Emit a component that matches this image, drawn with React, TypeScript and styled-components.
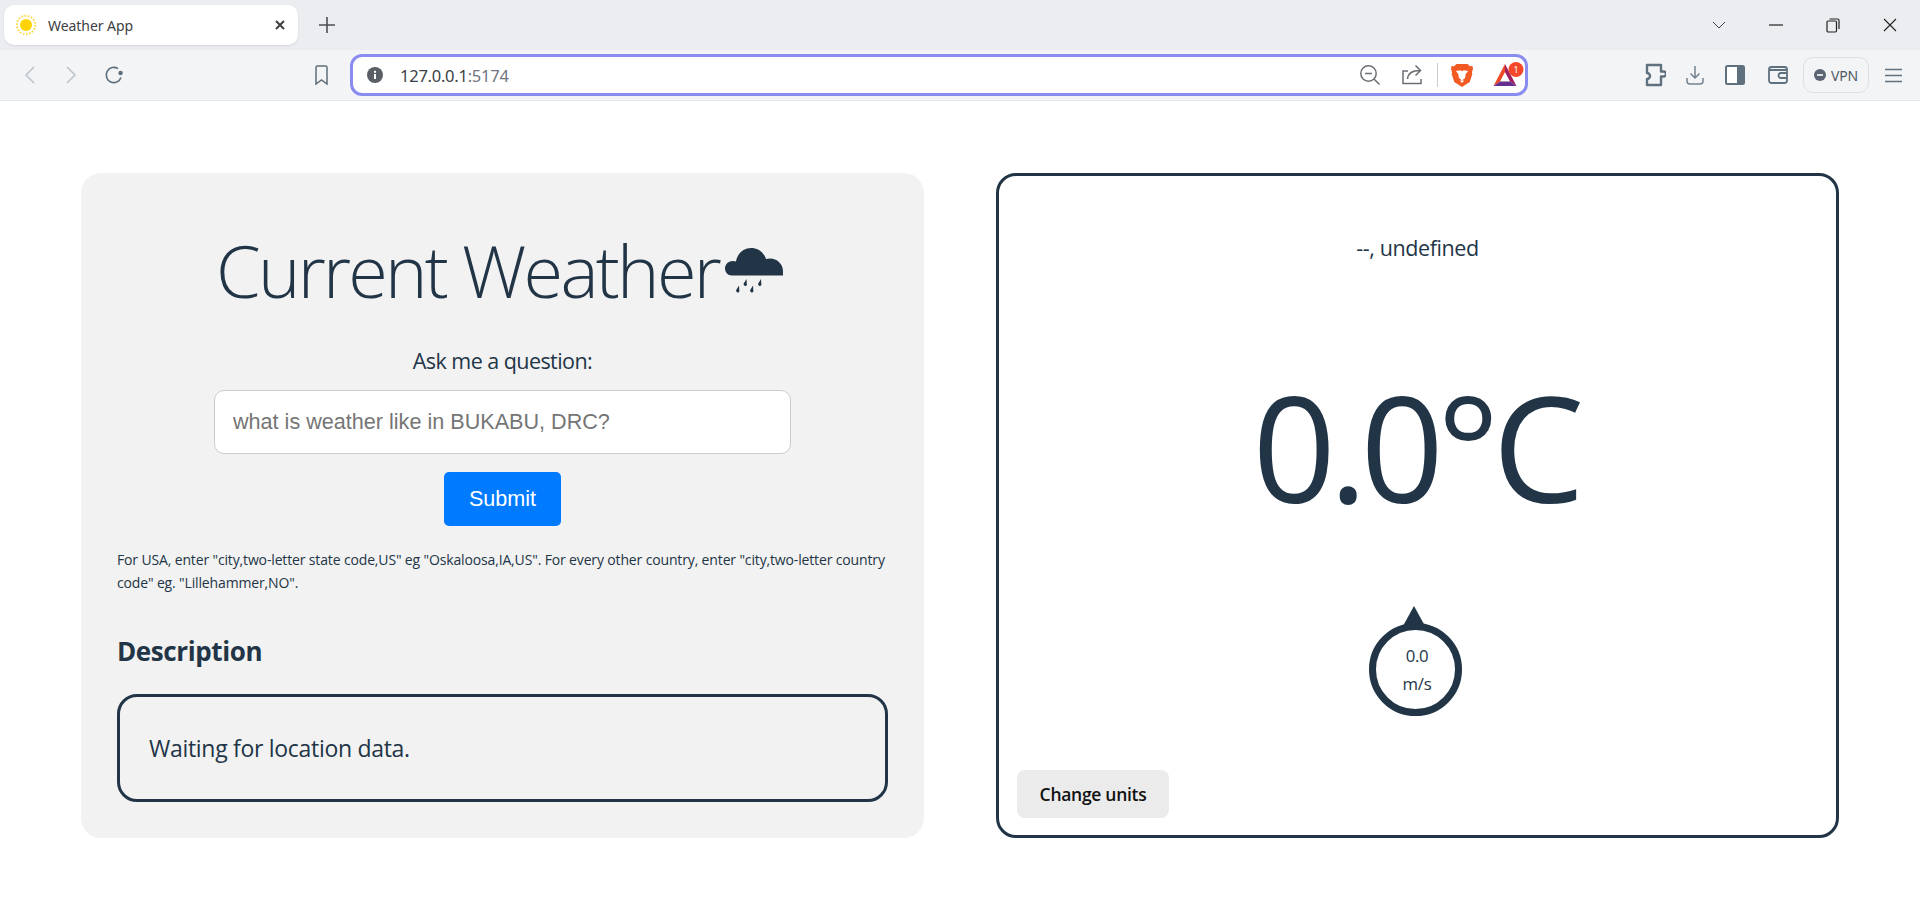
import styled, { createGlobalStyle } from "styled-components";

const Global = createGlobalStyle`
  html, body {
    margin: 0;
    padding: 0;
    background: #fff;
    overflow: hidden;
  }
  * {
    box-sizing: border-box;
  }
`;

const ink = "#223547";
const uiFont = `"Open Sans", "Noto Sans", sans-serif`;

const Shell = styled.div`
  width: 1920px;
  height: 918px;
  display: flex;
  flex-direction: column;
  font-family: ${uiFont};
  color: ${ink};
`;

const TabStrip = styled.div`
  height: 50px;
  flex: none;
  display: flex;
  align-items: flex-start;
  background: #ebedf1;
  padding: 5px 0 0 4px;
`;

const Tab = styled.div`
  width: 294px;
  height: 40px;
  display: flex;
  align-items: center;
  background: #fff;
  border-radius: 10px;
  padding: 0 12px 0 11px;
  font-size: 14px;
  color: #3c4043;
  box-shadow: 0 1px 2px rgba(60, 64, 67, 0.12);
`;

const TabTitle = styled.span`
  flex: 1;
  margin-left: 11px;
  font-family: "Noto Sans", sans-serif;
  font-size: 14px;
  letter-spacing: -0.05px;
`;

const NewTab = styled.div`
  width: 24px;
  height: 40px;
  margin-left: 17px;
  display: flex;
  align-items: center;
  justify-content: center;
`;

const WindowControls = styled.div`
  margin-left: auto;
  display: flex;
  height: 40px;
  padding-right: 2px;
`;

const WindowButton = styled.div`
  width: 57px;
  display: flex;
  align-items: center;
  justify-content: center;
`;

const Toolbar = styled.div`
  height: 51px;
  flex: none;
  display: flex;
  align-items: center;
  padding-left: 9px;
  background: #f3f4f6;
  border-bottom: 1px solid #e3e5e8;
`;

const Slot = styled.div<{ $gap?: number; $width?: number }>`
  width: ${(p) => p.$width ?? 41}px;
  margin-left: ${(p) => p.$gap ?? 0}px;
  flex: none;
  display: flex;
  align-items: center;
  justify-content: center;
`;

const UrlBar = styled.div`
  width: 1178px;
  height: 42px;
  margin-left: 8px;
  flex: none;
  display: flex;
  align-items: center;
  background: #fff;
  border: 3px solid #8b8cf0;
  border-radius: 12px;
  padding: 0 0 0 14px;
`;

const UrlText = styled.span`
  margin-left: 17px;
  flex: 1;
  font-family: "Noto Sans", sans-serif;
  font-size: 16.5px;
  letter-spacing: -0.25px;
  color: #3a3f45;
`;

const UrlPort = styled.span`
  color: #6f7680;
`;

const UrlDivider = styled.div`
  width: 1px;
  height: 24px;
  background: #c9ccd1;
  margin: 0 13px 0 14px;
`;

const VpnPill = styled.div`
  width: 66px;
  height: 36px;
  margin-left: 5px;
  flex: none;
  display: flex;
  align-items: center;
  justify-content: center;
  gap: 5px;
  border: 1.5px solid #dcdfe3;
  border-radius: 10px;
  font-family: "Noto Sans", sans-serif;
  font-size: 14px;
  letter-spacing: -0.2px;
  color: #4f5965;
`;

const Page = styled.main`
  flex: 1;
  display: grid;
  grid-template-columns: repeat(2, 1fr);
  grid-template-rows: 665px;
  column-gap: 72px;
  padding: 72px 81px 0 81px;
  background: #fff;
`;

const Panel = styled.section`
  background: #f2f2f2;
  border-radius: 20px;
  padding: 53px 36px 36px;
  display: flex;
  flex-direction: column;
`;

const TitleRow = styled.div`
  display: flex;
  align-items: center;
  justify-content: center;
  height: 88px;
  padding-right: 5px;
`;

const Title = styled.h1`
  margin: 0;
  font-size: 72px;
  line-height: 88px;
  font-weight: 300;
  letter-spacing: -2.75px;
  color: ${ink};
`;

const QuestionForm = styled.form`
  display: flex;
  flex-direction: column;
  align-items: center;
  margin-top: 33px;
`;

const QuestionLabel = styled.label`
  font-size: 21.5px;
  line-height: 28px;
  letter-spacing: -0.55px;
`;

const QuestionInput = styled.input`
  width: 577px;
  height: 64px;
  margin-top: 15px;
  padding: 0 18px;
  background: #fff;
  border: 1px solid #cccccc;
  border-radius: 10px;
  font-family: "Liberation Sans", Arial, sans-serif;
  font-size: 21.6px;
  outline: none;

  &::placeholder {
    color: #757575;
    opacity: 1;
  }
`;

const SubmitButton = styled.button`
  width: 117px;
  height: 54px;
  margin-top: 18px;
  border: 0;
  border-radius: 5px;
  background: #007bff;
  color: #fff;
  font-family: "Liberation Sans", Arial, sans-serif;
  font-size: 21.6px;
`;

const HelpText = styled.p`
  margin: 22px 0 0;
  font-size: 14px;
  line-height: 23px;
  letter-spacing: -0.145px;
`;

const SectionHeading = styled.h2`
  margin: 40px 0 0;
  font-size: 26px;
  line-height: 34px;
  font-weight: 700;
  letter-spacing: -0.4px;
  color: ${ink};
`;

const DescriptionBox = styled.div`
  height: 108px;
  margin-top: 26px;
  display: flex;
  align-items: center;
  padding: 0 29px;
  border: 3px solid ${ink};
  border-radius: 20px;
  font-size: 23px;
  letter-spacing: -0.3px;
`;

const ReadingPanel = styled.section`
  border: 3px solid ${ink};
  border-radius: 20px;
  background: #fff;
  padding: 58px 18px 17px;
  display: flex;
  flex-direction: column;
  align-items: center;
`;

const Place = styled.div`
  font-size: 21.5px;
  line-height: 28px;
  letter-spacing: -0.4px;
`;

const Temperature = styled.div`
  margin-top: 81px;
  margin-left: -5px;
  font-size: 146px;
  line-height: 208px;
  font-weight: 400;
  letter-spacing: -7px;
`;

const WindDial = styled.div`
  position: relative;
  width: 93px;
  height: 93px;
  margin-top: 72px;
  margin-left: -4px;
  padding-left: 3px;
  display: flex;
  flex-direction: column;
  align-items: center;
  justify-content: center;
  border: 7px solid ${ink};
  border-radius: 50%;
  font-size: 16.8px;
  line-height: 28px;
  letter-spacing: -0.3px;
`;

const WindArrow = styled.div`
  position: absolute;
  top: -24px;
  left: calc(50% - 1.5px);
  transform: translateX(-50%);
  width: 0;
  height: 0;
  border-left: 11px solid transparent;
  border-right: 11px solid transparent;
  border-bottom: 20px solid ${ink};
`;

const UnitsButton = styled.button`
  align-self: flex-start;
  margin-top: auto;
  width: 152px;
  height: 48px;
  border: 0;
  border-radius: 8px;
  background: #ebebeb;
  color: #111;
  font-family: ${uiFont};
  font-size: 17.5px;
  font-weight: 600;
  letter-spacing: -0.3px;
`;

const SunIcon = () => (
  <svg width="22" height="22" viewBox="0 0 22 22">
    <circle cx="11" cy="11" r="6" fill="#ffd400" />
    <circle cx="11" cy="11" r="9.2" fill="none" stroke="#ffd84a" strokeWidth="2" strokeDasharray="1.6 1.6" />
  </svg>
);

const TabClose = () => (
  <svg width="12" height="12" viewBox="0 0 12 12" fill="none" stroke="#3c4043" strokeWidth="2">
    <path d="M2 2l8 8M10 2l-8 8" />
  </svg>
);

const Plus = () => (
  <svg width="16" height="16" viewBox="0 0 16 16" fill="none" stroke="#4b4f54" strokeWidth="1.6">
    <path d="M8 0v16M0 8h16" />
  </svg>
);

const Chevron = () => (
  <svg width="14" height="8" viewBox="0 0 14 8" fill="none" stroke="#3f4347" strokeWidth="1">
    <path d="M1 1l6 6 6-6" />
  </svg>
);

const Minimize = () => (
  <svg width="14" height="2" viewBox="0 0 14 2">
    <path d="M0 1h14" stroke="#222" strokeWidth="1.2" />
  </svg>
);

const Restore = () => (
  <svg width="14" height="15" viewBox="0 0 14 15" fill="none" stroke="#222" strokeWidth="1.2">
    <rect x="1" y="3" width="9.5" height="11" rx="1.2" />
    <path d="M3.5 1h8a1.5 1.5 0 0 1 1.5 1.5V11" />
  </svg>
);

const CloseWin = () => (
  <svg width="14" height="14" viewBox="0 0 14 14" fill="none" stroke="#222" strokeWidth="1.1">
    <path d="M1 1l12 12M13 1L1 13" />
  </svg>
);

const Back = () => (
  <svg width="12" height="20" viewBox="0 0 12 20" fill="none" stroke="#bcc5cb" strokeWidth="1.6">
    <path d="M10 2L2 10l8 8" />
  </svg>
);

const Forward = () => (
  <svg width="12" height="20" viewBox="0 0 12 20" fill="none" stroke="#bcc5cb" strokeWidth="1.6">
    <path d="M2 2l8 8-8 8" />
  </svg>
);

const Reload = () => (
  <svg width="20" height="20" viewBox="0 0 20 20" fill="none">
    <path d="M17 12.5A7.6 7.6 0 1 1 14 3.6" stroke="#5b6f7c" strokeWidth="1.6" />
    <circle cx="16.6" cy="8" r="2.2" fill="#5b6f7c" />
  </svg>
);

const Bookmark = () => (
  <svg width="15" height="21" viewBox="0 0 15 21" fill="none" stroke="#5f6d78" strokeWidth="1.5">
    <path d="M2 2.5A1.5 1.5 0 0 1 3.5 1h8A1.5 1.5 0 0 1 13 2.5V19l-5.5-4L2 19z" />
  </svg>
);

const Info = () => (
  <svg width="16" height="16" viewBox="0 0 16 16">
    <circle cx="8" cy="8" r="8" fill="#5a5f66" />
    <rect x="7" y="7" width="2" height="5" fill="#fff" />
    <rect x="7" y="3.8" width="2" height="2" fill="#fff" />
  </svg>
);

const ZoomOut = () => (
  <svg width="22" height="22" viewBox="0 0 22 22" fill="none" stroke="#6b6f74" strokeWidth="1.5">
    <circle cx="9.5" cy="9.5" r="7.7" />
    <path d="M6 9.5h7M15 15l5.5 5.5" />
  </svg>
);

const Share = () => (
  <svg width="22" height="22" viewBox="0 0 22 22" fill="none" stroke="#6b6f74" strokeWidth="1.5">
    <path d="M7 7H2v12.5h18V15" />
    <path d="M6.5 15C7 9 11 6.5 19 6.5M14.5 1.5l5 5-5 5" />
  </svg>
);

const BraveLion = () => (
  <svg width="22" height="24" viewBox="0 0 20 24" preserveAspectRatio="none">
    <path d="M5 1h10l2.2 2.2L19.5 3l.5 3-1 3.2.4 1.8-2.4 8L10 24l-7-4.9-2.4-8L1 9.2 0 6l.5-3 2.3.2z" fill="#f15a22" />
    <path
      d="M4.5 8l4-.8 1.5 1 1.5-1 4 .8-2.2 3.2-.5 3.8-2.8 2.5L7.2 15l-.5-3.8z"
      fill="#fff"
    />
    <path d="M8 17.5h4L10 20z" fill="#fff" />
  </svg>
);

const BatBadge = () => (
  <svg width="32" height="28" viewBox="0 0 32 28">
    <path d="M12 3L.5 25 7 20.5 12 11z" fill="#ee4a25" />
    <path d="M12 3l11.5 22L17 20.5 12 11z" fill="#a01f5e" />
    <path d="M.5 25L7 20.5h10l6.5 4.5z" fill="#662d91" />
    <circle cx="23" cy="8.5" r="7.5" fill="#f5482b" />
    <text x="23" y="11.5" textAnchor="middle" fontSize="9" fontFamily="Noto Sans, sans-serif" fill="#fff">
      1
    </text>
  </svg>
);

const Puzzle = () => (
  <svg width="22" height="24" viewBox="0 0 22 24" fill="none" stroke="#5f717f" strokeWidth="2.4" strokeLinejoin="round">
    <path d="M3 2h14v6.5h2.5a2.5 2.5 0 0 1 0 5H17V22H3v-6a3 3 0 0 0 0-6z" />
  </svg>
);

const Download = () => (
  <svg width="18" height="20" viewBox="0 0 18 20" fill="none" stroke="#74838f" strokeWidth="1.5">
    <path d="M9 1v11M4.5 8.5L9 13l4.5-4.5M1 13v3a3 3 0 0 0 3 3h10a3 3 0 0 0 3-3v-3" />
  </svg>
);

const Sidebar = () => (
  <svg width="20" height="20" viewBox="0 0 20 20">
    <rect x="1" y="1" width="18" height="18" rx="1.5" fill="#fff" stroke="#5f717f" strokeWidth="2" />
    <rect x="12" y="1" width="7" height="18" fill="#5f717f" />
  </svg>
);

const Wallet = () => (
  <svg width="20" height="20" viewBox="0 0 20 20" fill="none" stroke="#5f717f" strokeWidth="1.8">
    <rect x="1" y="2" width="18" height="16" rx="2.5" />
    <path d="M19 8h-6a2.2 2.2 0 0 0 0 5h6M1 5h17" />
  </svg>
);

const VpnDot = () => (
  <svg width="12" height="12" viewBox="0 0 12 12">
    <circle cx="6" cy="6" r="6" fill="#5b6573" />
    <rect x="3" y="5.2" width="6" height="1.6" fill="#fff" />
  </svg>
);

const Menu = () => (
  <svg width="17" height="15" viewBox="0 0 17 15" stroke="#5f717f" strokeWidth="1.6">
    <path d="M0 1.5h17M0 7.5h17M0 13.5h17" />
  </svg>
);

const RainCloud = () => (
  <svg width="60" height="46" viewBox="0 0 60 46" style={{ marginLeft: 5 }}>
    <path
      d="M8 28.5C3.5 28.5 1 25 1 21.5 1 17 4.5 14 9 14c1 0 2 .2 3 .5C13.5 6 20 1 27 1c7 0 13 4.5 15 11 1-.3 2.5-.5 4-.5 7 0 13 5.5 13 12.5v4.5z"
      fill={ink}
    />
    <path
      d="M22.5 32l-2.8 4.4a1.8 1.8 0 0 0 3.2 1.6zM37 32l-2.8 4.4a1.8 1.8 0 0 0 3.2 1.6zM15 38.5l-2.8 4.4a1.8 1.8 0 0 0 3.2 1.6zM29 38.5l-2.8 4.4a1.8 1.8 0 0 0 3.2 1.6z"
      fill={ink}
    />
  </svg>
);

export default function App() {
  return (
    <Shell>
      <Global />
      <TabStrip>
        <Tab>
          <SunIcon />
          <TabTitle>Weather App</TabTitle>
          <TabClose />
        </Tab>
        <NewTab>
          <Plus />
        </NewTab>
        <WindowControls>
          <WindowButton>
            <Chevron />
          </WindowButton>
          <WindowButton>
            <Minimize />
          </WindowButton>
          <WindowButton>
            <Restore />
          </WindowButton>
          <WindowButton>
            <CloseWin />
          </WindowButton>
        </WindowControls>
      </TabStrip>
      <Toolbar>
        <Slot>
          <Back />
        </Slot>
        <Slot>
          <Forward />
        </Slot>
        <Slot $gap={2}>
          <Reload />
        </Slot>
        <Slot $gap={167}>
          <Bookmark />
        </Slot>
        <UrlBar>
          <Info />
          <UrlText>
            127.0.0.1<UrlPort>:5174</UrlPort>
          </UrlText>
          <ZoomOut />
          <Slot $width={22} $gap={20}>
            <Share />
          </Slot>
          <UrlDivider />
          <BraveLion />
          <Slot $width={32} $gap={20}>
            <BatBadge />
          </Slot>
        </UrlBar>
        <Slot $width={40} $gap={107}>
          <Puzzle />
        </Slot>
        <Slot $width={40}>
          <Download />
        </Slot>
        <Slot $width={40}>
          <Sidebar />
        </Slot>
        <Slot $width={40} $gap={3}>
          <Wallet />
        </Slot>
        <VpnPill>
          <VpnDot />
          VPN
        </VpnPill>
        <Slot $width={40} $gap={4}>
          <Menu />
        </Slot>
      </Toolbar>
      <Page>
        <Panel>
          <TitleRow>
            <Title>Current Weather</Title>
            <RainCloud />
          </TitleRow>
          <QuestionForm>
            <QuestionLabel>Ask me a question:</QuestionLabel>
            <QuestionInput placeholder="what is weather like in BUKABU, DRC?" />
            <SubmitButton type="button">Submit</SubmitButton>
          </QuestionForm>
          <HelpText>
            For USA, enter "city,two-letter state code,US" eg "Oskaloosa,IA,US". For every other country, enter
            "city,two-letter country code" eg. "Lillehammer,NO".
          </HelpText>
          <SectionHeading>Description</SectionHeading>
          <DescriptionBox>Waiting for location data.</DescriptionBox>
        </Panel>
        <ReadingPanel>
          <Place>--, undefined</Place>
          <Temperature>0.0°C</Temperature>
          <WindDial>
            <WindArrow />
            <span>0.0</span>
            <span>m/s</span>
          </WindDial>
          <UnitsButton type="button">Change units</UnitsButton>
        </ReadingPanel>
      </Page>
    </Shell>
  );
}
